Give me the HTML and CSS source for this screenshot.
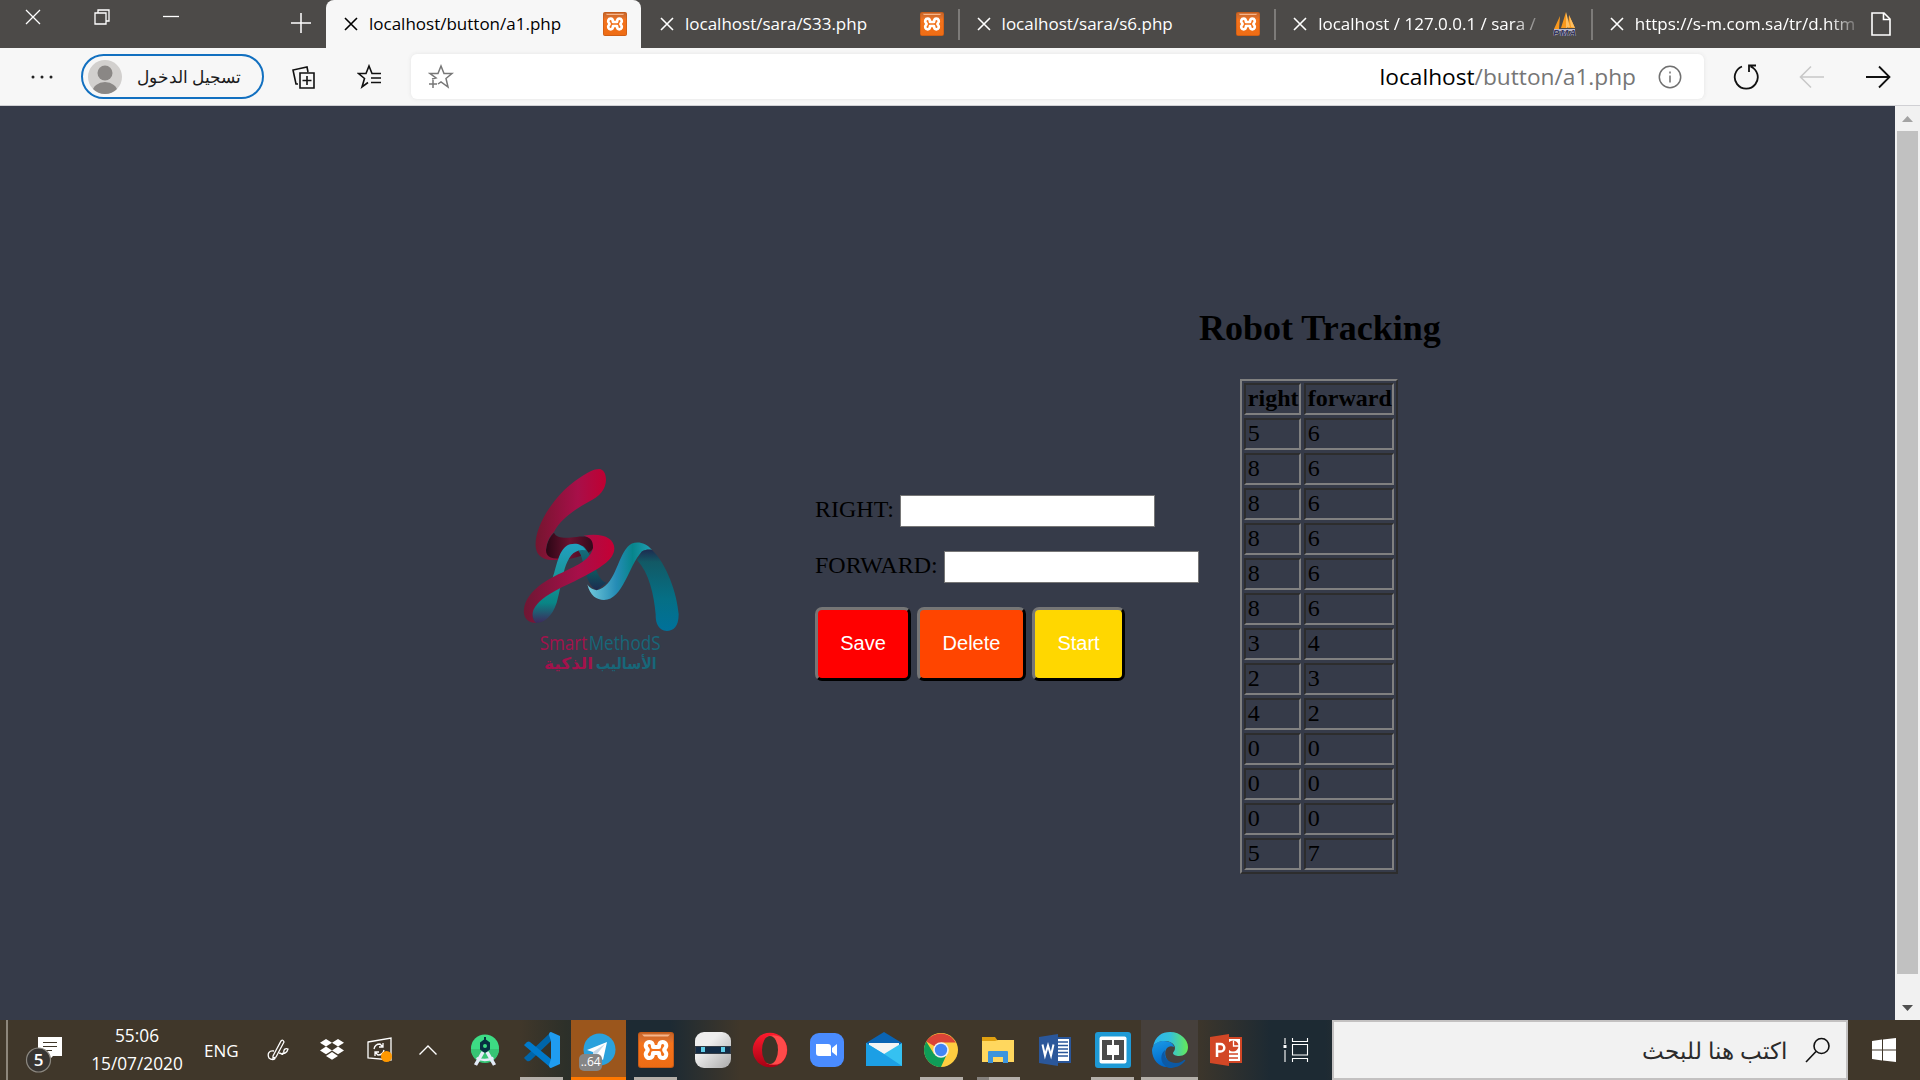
FILE: index.html
```html
<!DOCTYPE html>
<html lang="en">
<head>
<meta charset="utf-8">
<title>localhost/button/a1.php</title>
<link rel="stylesheet" href="styles.css">
</head>
<body>
<svg class="defs" aria-hidden="true">
  <defs>
    <linearGradient id="gOrange" x1="0" y1="0" x2="0" y2="1"><stop offset="0" stop-color="#c4642a"/><stop offset=".22" stop-color="#e0702a"/><stop offset=".3" stop-color="#f4731c"/><stop offset="1" stop-color="#ee6c14"/></linearGradient>
    <symbol id="xampp" viewBox="0 0 36 36">
      <rect width="36" height="36" rx="3" fill="#c65a16"/><rect x="1" y="1" width="34" height="34" rx="2.5" fill="url(#gOrange)"/>
      <path d="M4 2.5h28l-2 2H6z" fill="#f6b58a"/>
      <path d="M15 15h6c0-3 1-5 3.500-5 3.500 0 5 4 2.500 6.500q-1.500 1.500 0 3c2.500 2.500 1 6.500-2.500 6.500-2.500 0-3.500-2-3.500-5h-6c0 3-1 5-3.500 5-3.500 0-5-4-2.500-6.500q1.500-1.500 0-3C6.500 14 8 10 11.500 10 14 10 15 12 15 15z" fill="none" stroke="#fff" stroke-width="4" stroke-linejoin="round"/>
    </symbol>
    <symbol id="close" viewBox="0 0 14 14"><path d="M1 1l12 12M13 1L1 13" stroke="currentColor" stroke-width="1.600" fill="none"/></symbol>
  </defs>
</svg>

<header class="tabbar">
  <div class="window-buttons">
    <svg width="16" height="16" viewBox="0 0 16 16"><path d="M1 1l14 14M15 1L1 15" stroke="#fff" stroke-width="1.300"/></svg>
    <svg width="16" height="16" viewBox="0 0 16 16"><path d="M1 4h11v11H1zM4 4V1h11v11h-3" fill="none" stroke="#fff" stroke-width="1.300"/></svg>
    <svg width="16" height="16" viewBox="0 0 16 16"><path d="M0 7.500h16" stroke="#fff" stroke-width="1.300"/></svg>
  </div>
  <svg class="new-tab" width="20" height="20" viewBox="0 0 20 20"><path d="M0 10h20M10 0v20" stroke="#fff" stroke-width="1.500"/></svg>
  <div class="tab active"><svg class="x"><use href="#close"/></svg><span class="title">localhost/button/a1.php</span><svg class="fav"><use href="#xampp"/></svg></div>
  <div class="tab"><svg class="x"><use href="#close"/></svg><span class="title">localhost/sara/S33.php</span><svg class="fav"><use href="#xampp"/></svg></div>
  <div class="tab"><svg class="x"><use href="#close"/></svg><span class="title">localhost/sara/s6.php</span><svg class="fav"><use href="#xampp"/></svg></div>
  <div class="tab"><svg class="x"><use href="#close"/></svg><span class="title fade">localhost / 127.0.0.1 / sara /</span>
    <svg class="fav" viewBox="0 0 24 24"><path d="M1 17L7 4l-1 13zM8 16L13 0l1 16zM15 16L16 3l6 13z" fill="#f8981d"/><path d="M13 0v16l4-1zM16 3l2 12 4 1z" fill="#ffc061"/><path d="M1 18h21" stroke="#b5b5c8" stroke-width="2"/><text x="0" y="23.500" font-family="Liberation Sans, sans-serif" font-size="9.500" font-weight="bold" font-style="italic" fill="#34345e" stroke="#c8c8da" stroke-width=".7" paint-order="stroke" textLength="23">PMA</text></svg></div>
  <div class="tab last"><svg class="x"><use href="#close"/></svg><span class="title fade">https://s-m.com.sa/tr/d.htm</span>
    <svg class="fav" viewBox="0 0 24 24"><path d="M3 1h12l6 6v16H3zM14.500 1v6.500H21" fill="none" stroke="#fff" stroke-width="1.600"/></svg></div>
</header>

<nav class="toolbar">
  <svg class="dots" width="24" height="6" viewBox="0 0 24 6"><g fill="#222"><circle cx="3" cy="3" r="1.500"/><circle cx="12" cy="3" r="1.500"/><circle cx="21" cy="3" r="1.500"/></g></svg>
  <div class="signin">
    <svg width="34" height="34" viewBox="0 0 34 34"><clipPath id="av"><circle cx="17" cy="17" r="17"/></clipPath><g clip-path="url(#av)"><rect width="34" height="34" fill="#d2d0ce"/><circle cx="17" cy="13" r="7.500" fill="#8a8785"/><ellipse cx="17" cy="32" rx="12.500" ry="10" fill="#8a8785"/></g></svg>
    <span dir="rtl" lang="ar">تسجيل الدخول</span>
  </div>
  <svg class="collections" width="24" height="24" viewBox="0 0 24 24" fill="none" stroke="#111" stroke-width="1.600"><path d="M8 7h14v15H8zM15 10v9M10.500 14.500h9M6 18H4L1 4l14-3 1 5"/></svg>
  <svg class="favs" width="26" height="26" viewBox="0 0 26 26" fill="none" stroke="#111" stroke-width="1.600"><path d="M24 9.500h-9L12 2 9 9.500H1.500l6 5L5 23l6-4.500M14 14h10M14 18.500h10"/></svg>
  <div class="address">
    <svg width="26" height="26" viewBox="0 0 26 26" fill="none" stroke="#777" stroke-width="1.500"><path d="M4 15L8 14 2 9.500h8L13 2l3 7.500h8l-6 5L20 23l-7-5-3 2M5 16v8M1 20h8"/></svg>
    <span class="url"><b>localhost</b>/button/a1.php</span>
    <svg width="24" height="24" viewBox="0 0 24 24" fill="none" stroke="#707070" stroke-width="1.500"><circle cx="12" cy="12" r="10.700"/><path d="M12 10.500v7M12 6.500v2"/></svg>
  </div>
  <svg class="reload" width="26" height="26" viewBox="0 0 26 26" fill="none" stroke="#111" stroke-width="1.800"><path d="M9 2.500A11.500 11.500 0 1 0 17.500 2.500M23 1.500h-7V8"/></svg>
  <svg class="back" width="26" height="24" viewBox="0 0 26 24" fill="none" stroke="#c8c8c8" stroke-width="1.600"><path d="M25 12H2M12 1.500L1.500 12 12 22.500"/></svg>
  <svg class="forward" width="26" height="24" viewBox="0 0 26 24" fill="none" stroke="#111" stroke-width="1.800"><path d="M1 12h23M14 1.500L24.500 12 14 22.500"/></svg>
</nav>

<div class="viewport">
  <main class="page">
    <svg class="logo" width="200" height="240" viewBox="0 0 600 720">
      <defs>
        <linearGradient id="r1"><stop offset="0" stop-color="#75152f"/><stop offset=".6" stop-color="#a80f49"/><stop offset="1" stop-color="#c00032"/></linearGradient>
        <linearGradient id="r2"><stop offset="0" stop-color="#6e1733"/><stop offset=".6" stop-color="#a70f49"/><stop offset="1" stop-color="#c50034"/></linearGradient>
        <linearGradient id="r3"><stop offset="0" stop-color="#2b0615"/><stop offset=".5" stop-color="#6a1230"/><stop offset="1" stop-color="#31091b"/></linearGradient>
        <linearGradient id="t1" x1="0" y1="0" x2="0" y2="1"><stop offset="0" stop-color="#21a0c0"/><stop offset=".4" stop-color="#1a959b"/><stop offset=".75" stop-color="#098585"/><stop offset="1" stop-color="#3d2a5c"/></linearGradient>
        <linearGradient id="t2"><stop offset="0" stop-color="#73cbdd"/><stop offset=".45" stop-color="#258cb5"/><stop offset=".7" stop-color="#07858c"/><stop offset="1" stop-color="#22a0b4"/></linearGradient>
        <linearGradient id="t3" x1="0" y1="0" x2="0" y2="1"><stop offset="0" stop-color="#1d2b50"/><stop offset=".15" stop-color="#125965"/><stop offset=".6" stop-color="#056f85"/><stop offset="1" stop-color="#00719a"/></linearGradient>
        <linearGradient id="t4" x1="0" y1="0" x2="0" y2="1"><stop offset="0" stop-color="#167080"/><stop offset=".6" stop-color="#10535e"/><stop offset="1" stop-color="#1d2b50"/></linearGradient>
      </defs>
      <path d="M162 245C140 265 132 305 143 321C185 335 270 315 281 290C285 255 255 255 230 258C195 262 170 262 162 245Z" fill="url(#r3)"/>
      <path d="M298 54C270 53 215 95 185 125C140 172 103 240 107 287C110 318 135 329 170 327L190 323C150 325 138 315 138 297C140 270 150 255 162 243C180 205 225 175 265 153C300 136 318 115 318 85C317 65 310 56 298 54Z" fill="url(#r1)"/>
      <path d="M235 300C255 320 250 395 290 418L320 395C285 385 285 315 248 284Z" fill="url(#t4)"/>
      <path d="M262 400C270 435 290 447 312 447C370 445 385 345 425 302C438 295 448 295 456 297C432 268 398 270 383 287C350 325 345 405 290 418C275 415 268 410 262 400Z" fill="url(#t2)"/>
      <path d="M411 327L425 302C435 296 445 295 456 297C500 338 532 430 536 490C536 528 520 540 500 540C477 538 466 520 467 490C462 430 447 365 411 327Z" fill="url(#t3)"/>
      <path d="M258 298C245 278 228 276 210 280C175 290 170 350 158 380C140 430 100 450 96 490L105 515C130 517 155 500 170 455C190 390 190 300 246 297Z" fill="url(#t1)"/>
      <path d="M250 254C310 245 342 262 343 292C343 325 305 348 260 372C200 405 110 435 98 485C96 500 100 510 108 515C85 517 68 500 72 473C80 425 130 392 175 370C225 345 270 330 279 290C280 268 270 258 250 254Z" fill="url(#r2)"/>
      <text class="logo-name" x="119" y="598" textLength="143" lengthAdjust="spacingAndGlyphs" fill="#a3124c">Smart</text>
      <text class="logo-name" x="266" y="598" textLength="216" lengthAdjust="spacingAndGlyphs" fill="#176779">MethodS</text>
      <text class="logo-ar" x="470" y="654" direction="rtl" textLength="183" lengthAdjust="spacingAndGlyphs" fill="#176779">الأساليب</text>
      <text class="logo-ar" x="279" y="654" direction="rtl" textLength="147" lengthAdjust="spacingAndGlyphs" fill="#a3124c">الذكية</text>
    </svg>

    <form class="controls">
      <div class="field"><label for="right">RIGHT:</label><input id="right" type="text"></div>
      <div class="field"><label for="forward">FORWARD:</label><input id="forward" type="text"></div>
      <div class="actions">
        <button type="button" class="save">Save</button>
        <button type="button" class="delete">Delete</button>
        <button type="button" class="start">Start</button>
      </div>
    </form>

    <section class="tracking">
      <h2>Robot Tracking</h2>
      <table>
        <tbody>
        <tr><th>right</th><th>forward</th></tr>
        <tr><td>5</td><td>6</td></tr>
        <tr><td>8</td><td>6</td></tr>
        <tr><td>8</td><td>6</td></tr>
        <tr><td>8</td><td>6</td></tr>
        <tr><td>8</td><td>6</td></tr>
        <tr><td>8</td><td>6</td></tr>
        <tr><td>3</td><td>4</td></tr>
        <tr><td>2</td><td>3</td></tr>
        <tr><td>4</td><td>2</td></tr>
        <tr><td>0</td><td>0</td></tr>
        <tr><td>0</td><td>0</td></tr>
        <tr><td>0</td><td>0</td></tr>
        <tr><td>5</td><td>7</td></tr>
        </tbody>
      </table>
    </section>
  </main>
  <div class="scrollbar">
    <svg width="25" height="25" viewBox="0 0 25 25"><path d="M7 16h11l-5.500-6z" fill="#a3a3a3"/></svg>
    <div class="thumb"></div>
    <svg width="25" height="25" viewBox="0 0 25 25"><path d="M7 10h11l-5.500 6z" fill="#505050"/></svg>
  </div>
</div>

<footer class="taskbar">
  <div class="tray">
    <svg class="notify" width="40" height="40" viewBox="0 0 40 40"><path d="M14 4h24v19h-9l-5 5v-5H14z" fill="#fff"/><path d="M19 9.500h14M19 13.500h14M19 17.500h9" stroke="#3f3628" stroke-width="1.200"/><circle cx="14.500" cy="27" r="12" fill="#383532" stroke="#8c8880" stroke-width="1.200"/><text x="14.500" y="33" text-anchor="middle" font-family="Open Sans, sans-serif" font-size="17" font-weight="600" fill="#fff">5</text></svg>
    <div class="clock"><span>55:06</span><span>15/07/2020</span></div>
    <span class="lang">ENG</span>
    <svg class="pen" width="22" height="22" viewBox="0 0 22 22" fill="none" stroke="#fff" stroke-width="1.300"><path d="M6 17L14 2q2-2 3 1L9 18l-3 1zM7 12C2 11 0 15 2 19c2 2 6 2 6 0M12 14c3 0 3 3 5 0-1-4 2-5 4-4-1 4-4 5-6 4"/></svg>
    <svg class="dropbox" width="24" height="22" viewBox="0 0 24 22" fill="#fff"><path d="M6 0l6 3.800-6 3.800L0 3.800zM18 0l6 3.800-6 3.800-6-3.800zM6 7.600l6 3.800-6 3.800-6-3.800zM18 7.600l6 3.800-6 3.800-6-3.800zM12 13l6 3.900-6 3.900-6-3.900z"/></svg>
    <svg class="sync" width="26" height="26" viewBox="0 0 26 26"><path d="M1 5L24 1v22L1 21z" fill="none" stroke="#fff" stroke-width="1.300"/><path d="M7 12q1-5 6-5l3 3m0-4v4h-4M17 13q-1 5-6 5l-3-3m0 4v-4h4" fill="none" stroke="#fff" stroke-width="1.300"/><circle cx="19.500" cy="19.500" r="5.500" fill="#ff9800"/></svg>
    <svg class="chevron" width="18" height="10" viewBox="0 0 18 10"><path d="M.5 9.500L9 1l8.500 8.500" fill="none" stroke="#fff" stroke-width="1.400"/></svg>
  </div>
  <div class="apps">
    <div class="app"><svg viewBox="0 0 36 36"><circle cx="18" cy="16.500" r="14" fill="#3ddc84"/><path d="M4 17h28a14 14 0 0 1-28 0z" fill="#36c474"/><path d="M14 11l4-3 4 3v6l-4 3-4-3zM18 5v4" fill="#073042" stroke="#073042" stroke-width="2"/><circle cx="18" cy="14" r="2" fill="#3ddc84"/><path d="M16 20L8.500 33M20 20l7.500 13" stroke="#e4ebf8" stroke-width="3.500"/><path d="M9.500 26q8 4 17 0" fill="none" stroke="#e4ebf8" stroke-width="2.500"/></svg></div>
    <div class="app open"><svg viewBox="0 0 36 36"><path d="M27 0L2 24q-3 2-1 3l2 2q2 1 4-1L27 9z" fill="#0065a9"/><path d="M0 13l3-3q2-1 3 0l21 17v9L1 14z" fill="#007acc"/><path d="M27 0l9 4v28l-9 4q-2 0-2-3l2-6V9l-2-6q0-3 2-3z" fill="#1f9cf0"/></svg></div>
    <div class="app telegram"><svg viewBox="0 0 36 36"><circle cx="18.500" cy="17.500" r="16" fill="#2ba1dc"/><path d="M6 18L26 10l-4 18-6-5-3 4-1-7z" fill="#fff"/><path d="M12 20L24 12l-8 10-3 5z" fill="#c8daea"/></svg><span class="badge">..64</span></div>
    <div class="app open"><svg><use href="#xampp"/></svg></div>
    <div class="app"><svg viewBox="0 0 36 36"><defs><linearGradient id="rb" x2="1" y2="1"><stop offset=".35" stop-color="#eee"/><stop offset="1" stop-color="#aaa"/></linearGradient></defs><rect width="36" height="36" rx="9" fill="url(#rb)"/><path d="M0 14h36v8H0z" fill="#333c45"/><path d="M1 15h34v6H1z" fill="#122b45"/><path d="M6 15h4v5H6zM26 15h4v5h-4z" fill="#5fcde8"/></svg></div>
    <div class="app"><svg viewBox="0 0 36 36"><defs><linearGradient id="op" x2="0" y2="1"><stop stop-color="#ff1b2d"/><stop offset="1" stop-color="#a70014"/></linearGradient></defs><circle cx="18" cy="18" r="17.300" fill="url(#op)"/><path d="M14 5a8 13 0 0 1 0 26 17 17 0 0 0 15 0 17 17 0 0 0 0-26 17 17 0 0 0-15 0z" fill="#ff4a4a"/><ellipse cx="18" cy="18" rx="8" ry="14" fill="#3b3427"/></svg></div>
    <div class="app"><svg viewBox="0 0 36 36"><rect x="1" y="1" width="34" height="34" rx="9" fill="#4a8cff"/><path d="M7 12h12q3 0 3 3v9H10q-3 0-3-3zM23 16l5-4v12l-5-4z" fill="#fff"/></svg></div>
    <div class="app"><svg viewBox="0 0 36 36"><path d="M0 11L18 0l18 11v10H0z" fill="#0a64b4"/><path d="M3 11h30v12H3z" fill="#f4f4f4"/><path d="M0 11l18 11 18-11v23H0z" fill="#35c1f1"/><path d="M0 11l18 11L36 34H0z" fill="#1c9fe5"/></svg></div>
    <div class="app open"><svg viewBox="0 0 36 36"><circle cx="18" cy="18" r="17" fill="#ffcd40"/><path d="M18 18L3.300 9.500A17 17 0 0 1 32.700 10.500H18z" fill="#db4437"/><path d="M3.300 9.500L11 22l12 2-5 11A17 17 0 0 1 3.300 9.500z" fill="#0f9d58"/><circle cx="18" cy="18" r="7.800" fill="#f1f1f1"/><circle cx="18" cy="18" r="6.200" fill="#4285f4"/></svg></div>
    <div class="app open stacked"><svg viewBox="0 0 36 36"><path d="M2 5h13l3 4h14v10H2z" fill="#e0a010"/><path d="M2 9h13l3-1h16v22H2z" fill="#ffd75e"/><path d="M8 31V20q0-1 1-1h18q1 0 1 1v11h-5v-6H13v6z" fill="#3c94dc"/></svg></div>
    <div class="app"><svg viewBox="0 0 36 36"><path d="M19 6h14v24H19z" fill="#fff" stroke="#2b579a" stroke-width="2"/><path d="M20 10h11M20 13.500h11M20 17h11M20 20.500h11M20 24h11" stroke="#2b579a" stroke-width="1.500"/><path d="M2 5l19-3v32L2 31z" fill="#2b579a"/><path d="M5.500 12.500l2.500 11 3-10 3 10 2.500-11" fill="none" stroke="#fff" stroke-width="2"/></svg></div>
    <div class="app open"><svg viewBox="0 0 36 36"><rect width="36" height="36" rx="3" fill="#1e9ad6"/><rect x="4.500" y="4.500" width="27" height="27" rx="2" fill="#fff"/><path d="M7 8h10v5h-5v10h5v5H7zM29 8H19v5h5v10h-5v5h10z" fill="#4b4b4b"/><rect x="12.500" y="13" width="11" height="10" fill="#fff"/></svg></div>
    <div class="app current"><svg viewBox="0 0 36 36"><defs><linearGradient id="e1"><stop stop-color="#2bb4f0"/><stop offset=".5" stop-color="#35c1d8"/><stop offset="1" stop-color="#66eb55"/></linearGradient><linearGradient id="e2" x2=".3" y2="1"><stop stop-color="#1a9be8"/><stop offset="1" stop-color="#0067c8"/></linearGradient></defs><path d="M1 15C3 4 10 0 18 0c11 0 18 8 18 15 0 6-4 9-9 9-3 0-6-1-6-3 0-1 2-2 2-5 0-4-5-7-10-7-6 0-11 3-12 6z" fill="url(#e1)"/><path d="M0 18C1 11 7 9 12 9c7 0 10 4 10 6q-4-2-7 1c-4 5-1 14 7 17-10 6-22-2-22-15z" fill="url(#e2)"/><path d="M13 18c-2 8 4 13 11 13 4 0 6-2 8-3q2-1 1 1c-4 5-10 7-15 7-8-1-12-12-5-18z" fill="#0c59a4"/></svg></div>
    <div class="app"><svg viewBox="0 0 36 36"><path d="M19 6h13v24H19z" fill="#fff" stroke="#d24726" stroke-width="2"/><path d="M20 22h9M20 26h9" stroke="#d24726" stroke-width="1.500"/><circle cx="24" cy="14" r="5.500" fill="#d24726"/><path d="M24.500 8.500v5.500H30" fill="none" stroke="#fff" stroke-width="1.300"/><path d="M1 5l19-3v32L1 31z" fill="#d24726"/><path d="M8 25V12h3.500a3.800 3.800 0 0 1 0 7.600H8" fill="none" stroke="#fff" stroke-width="2.500"/></svg></div>
  </div>
  <svg class="taskview" width="26" height="24" viewBox="0 0 26 24" fill="none" stroke="#fff" stroke-width="1.100"><path d="M2 0v6M2 12v12M9.500 0v3.500h15V0M9.500 24v-3.500h15V24M9.500 6.500h15v10.500h-15z"/><path d="M.5 7h3v3h-3z" fill="#fff" stroke="none"/></svg>
  <div class="search"><span dir="rtl" lang="ar">اكتب هنا للبحث</span><svg width="26" height="26" viewBox="0 0 26 26" fill="none" stroke="#111" stroke-width="1.600"><circle cx="16.500" cy="9" r="7.500"/><path d="M11 14.500L1 25"/></svg></div>
  <svg class="windows" width="24" height="24" viewBox="0 0 24 24" fill="#fff"><path d="M0 3l10-1.400V11.500H0zM11 1.500L24 0v11.500H11zM0 12.500h10v9.900L0 21zM11 12.500h13V24l-13-1.500z"/></svg>
</footer>
</body>
</html>
```
FILE: styles.css
```css
* { box-sizing: border-box; }
body { margin: 0; width: 1920px; height: 1080px; overflow: hidden; display: flex; flex-direction: column; background: #363b49; font-family: "Open Sans", "Noto Sans", sans-serif; }
svg { display: block; flex: none; }
.defs { position: absolute; width: 0; height: 0; }

/* tab strip */
.tabbar { height: 48px; flex: none; display: flex; background: #4c4a48; color: #fff; }
.window-buttons { display: flex; gap: 53px; padding: 9px 0 0 25px; }
.new-tab { margin: 13px 15px 0 112px; }
.tab { width: 316.6px; height: 48px; flex: none; display: flex; align-items: center; padding: 0 15px 0 18px; position: relative; }
.tab.last { padding-right: 28px; width: 328px; }
.tab + .tab:not(.active)::after { content: ""; position: absolute; right: -1px; top: 9px; width: 2px; height: 31px; background: #7d7b79; }
.tab.active { background: #f7f7f7; color: #000; border-radius: 8px 8px 0 0; width: 315px; padding-right: 14px; margin-right: 1px; }
.tab.active::after, .tab.last::after { display: none; }
.x { width: 14px; height: 14px; margin-right: 11px; }
.title { flex: 1; font-size: 17px; line-height: 24px; white-space: nowrap; }
.title.fade { margin-right: 14px; -webkit-mask-image: linear-gradient(90deg, #000 88%, transparent 104%); mask-image: linear-gradient(90deg, #000 88%, transparent 104%); }
.fav { width: 24px; height: 24px; }

/* toolbar */
.toolbar { height: 58px; flex: none; display: flex; align-items: center; background: #f7f7f7; border-bottom: 1px solid #d0d0d4; }
.dots { margin: 0 27px 0 30px; }
.signin { width: 183px; height: 45px; display: flex; align-items: center; justify-content: space-between; padding: 0 21px 0 5px; border: 2px solid #1270c0; border-radius: 23px; font-size: 17.300px; color: #1b1b1b; white-space: nowrap; }
.collections { margin: 2px 0 0 28px; }
.favs { margin: 0 28px 0 41px; }
.address { width: 1293px; height: 45px; display: flex; align-items: center; gap: 22px; background: #fff; border-radius: 6px; padding: 0 22px 0 17px; box-shadow: 0 0 4px #e4e4e4; }
.url { flex: 1; text-align: right; font-size: 22.700px; color: #767676; }
.url b { font-weight: 400; color: #000; }
.reload { margin-left: 29px; }
.back { margin-left: 40px; }
.forward { margin-left: 40px; }

/* page */
.viewport { height: 914px; flex: none; display: flex; }
.page { width: 1895px; padding-left: 500px; display: flex; align-items: flex-start; font-family: "Liberation Serif", serif; font-size: 24px; color: #000; }
.logo { margin-top: 345px; }
.logo-name { font-family: "Open Sans", sans-serif; font-size: 58px; font-weight: 400; }
.logo-ar { font-family: "DejaVu Sans", sans-serif; font-size: 48px; font-weight: bold; }
.controls { margin: 389px 0 0 115px; width: 384px; display: flex; flex-direction: column; gap: 24px; }
.field { display: flex; gap: 6px; height: 32px; }
.field label { line-height: 28px; }
.field input { width: 255px; height: 32px; border: 1px solid #767676; background: #fff; padding: 0; }
.actions { display: flex; gap: 6px; }
.actions button { height: 74px; padding: 0 0 2px; border: 3px outset #767676; border-color: #767676 #212121 #212121 #767676; border-radius: 7px; font: 20px "Liberation Sans", sans-serif; color: #fff; }
.actions .save { width: 96px; background: #f00; }
.actions .delete { width: 109px; background: #ff4500; }
.actions .start { width: 93px; background: #ffd700; }
.tracking { margin-top: 202px; display: flex; flex-direction: column; align-items: center; }
h2 { margin: 0 0 30px; font-size: 36px; line-height: 41px; white-space: nowrap; }
table { display: grid; width: 158px; margin-right: 2px; border: 2px solid; border-color: #808080 #2d2d2d #2d2d2d #808080; padding: 2px; }
tbody { display: grid; grid-template-columns: 57px 90px; gap: 3px; }
tr { display: contents; }
th, td { height: 32px; padding: 0 2px; line-height: 26px; text-align: left; border: 2px solid; border-color: #2d2d2d #808080 #808080 #2d2d2d; }
.scrollbar { width: 25px; background: #f1f1f1; display: flex; flex-direction: column; align-items: center; justify-content: space-between; }
.thumb { width: 21px; height: 843px; margin-bottom: 21px; background: #c1c1c1; }

/* taskbar */
.taskbar { height: 60px; flex: none; display: flex; background: linear-gradient(90deg, #40372a 0, #40372a 520px, #2d3029 565px, #1d2a33 630px, #1d2a33 670px, #40372a 740px, #40372a 1190px, #1d2a33 1270px, #1d2a33 1325px, #40372a 1400px); color: #fff; }
.tray { width: 450px; margin-left: 6px; border-left: 2px solid #8d867b; display: flex; align-items: center; }
.notify { margin: 6px 0 0 16px; }
.clock { display: flex; flex-direction: column; align-items: center; width: 94px; margin-left: 26px; font-size: 17.300px; line-height: 28px; }
.lang { margin-left: 20px; font-size: 17px; }
.pen { margin-left: 28px; }
.dropbox { margin-left: 31px; }
.sync { margin-left: 23px; }
.chevron { margin-left: 26px; }
.apps { display: flex; }
.app { width: 57.100px; height: 60px; display: flex; align-items: center; justify-content: center; position: relative; }
.app svg { width: 36px; height: 36px; }
.app.open::after, .app.current::after, .telegram::after { content: ""; position: absolute; left: 7px; right: 7px; bottom: 0; height: 3px; background: #b4afa9; }
.app.stacked::before { content: ""; position: absolute; left: 7px; bottom: 0; width: 12px; height: 3px; background: #85817c; z-index: 1; }
.app.current { background: #46403c; }
.app.current::after { left: 0; right: 0; }
.telegram { background: linear-gradient(#9b561c, #9b561c) center / 55px 100% no-repeat; }
.telegram::after { left: 1px; right: 1px; background: #ff7800; }
.badge { position: absolute; left: 9px; top: 34px; width: 23px; height: 17px; border-radius: 5px; background: #858585; font-size: 12px; line-height: 16px; text-align: center; }
.taskview { margin: 18px 0 0 28px; }
.search { width: 516px; height: 60px; margin-left: auto; display: flex; align-items: center; justify-content: flex-end; gap: 18px; padding-right: 15px; background: #f2f2f2; border: 2px solid #c3c1c1; color: #2b2b2b; font-size: 23px; }
.windows { margin: 18px 24px 0; }
```
